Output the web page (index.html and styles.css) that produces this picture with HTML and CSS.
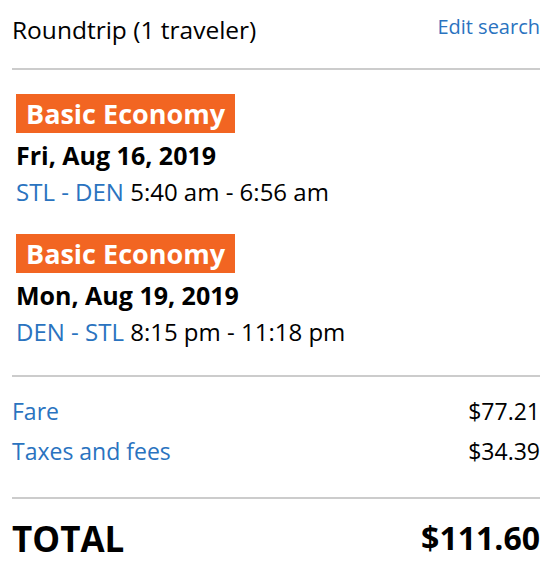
FILE: index.html
```html
<!DOCTYPE html>
<html lang="en">
<head>
    <meta charset="UTF-8">
    <meta name="viewport" content="width=device-width, initial-scale=1.0">
    <title>Trip Summary</title>
    <link rel="stylesheet" href="styles.css">
</head>
<body>

    <div class="summary">

        <!-- Header -->
        <div class="summary-head">
            <div class="trip-type">Roundtrip (1 traveler)</div>
            <a class="edit-link" href="#">Edit search</a>
        </div>

        <hr class="divider divider-top">

        <!-- Flights -->
        <div class="flights">
            <div class="flight">
                <span class="fare-badge">Basic Economy</span>
                <div class="flight-date">Fri, Aug 16, 2019</div>
                <div class="flight-route"><span class="airports">STL - DEN</span> 5:40 am - 6:56 am</div>
            </div>
            <div class="flight">
                <span class="fare-badge">Basic Economy</span>
                <div class="flight-date">Mon, Aug 19, 2019</div>
                <div class="flight-route"><span class="airports">DEN - STL</span> 8:15 pm - 11:18 pm</div>
            </div>
        </div>

        <hr class="divider">

        <!-- Price breakdown -->
        <div class="prices">
            <div class="price-row">
                <a class="price-label" href="#">Fare</a>
                <span class="price-value">$77.21</span>
            </div>
            <div class="price-row">
                <a class="price-label" href="#">Taxes and fees</a>
                <span class="price-value">$34.39</span>
            </div>
        </div>

        <hr class="divider">

        <div class="total-row">
            <span class="total-label">TOTAL</span>
            <span class="total-value">$111.60</span>
        </div>

    </div>

</body>
</html>
```

FILE: styles.css
```css
/* Page */
body {
    margin: 0;
    padding: 0;
    background-color: #fff;
    color: #000;
    font-family: 'Open Sans', 'Liberation Sans', sans-serif;
}

.summary {
    padding: 0 14px 0 12px;
}

/* Header */
.summary-head {
    display: flex;
    justify-content: space-between;
    align-items: flex-start;
    padding-top: 14px;
}

.trip-type {
    font-size: 24.5px;
    line-height: 32px;
}

.edit-link {
    font-size: 20px;
    line-height: 25px;
    color: #2a73bf;
    text-decoration: none;
}

/* Dividers */
.divider {
    border: none;
    height: 2px;
    background-color: #cccccc;
    margin: 27px 0 0 0;
}

.divider-top {
    margin-top: 22px;
}

/* Flights */
.flights {
    display: flex;
    flex-direction: column;
    gap: 26px;
    padding: 24px 0 0 4px;
}

.fare-badge {
    display: inline-block;
    background-color: #f26522;
    color: #fff;
    font-size: 27px;
    font-weight: bold;
    line-height: 39px;
    padding: 0 10px;
}

.flight-date {
    font-size: 25px;
    font-weight: bold;
    line-height: 32px;
    margin-top: 6px;
}

.flight-route {
    font-size: 24px;
    line-height: 32px;
    margin-top: 5px;
}

.airports {
    color: #2a73bf;
}

/* Prices */
.prices {
    padding: 14px 0 26px 0;
}

.prices + .divider {
    margin-top: 0;
}

.price-row {
    display: flex;
    justify-content: space-between;
    font-size: 23px;
    line-height: 40px;
}

.price-label {
    color: #2a73bf;
    text-decoration: none;
}

/* Total */
.total-row {
    display: flex;
    justify-content: space-between;
    align-items: flex-start;
    font-weight: bold;
    margin-top: 17px;
}

.total-label {
    font-size: 35px;
    line-height: 46px;
}

.total-value {
    font-size: 32px;
    line-height: 43px;
}
```
